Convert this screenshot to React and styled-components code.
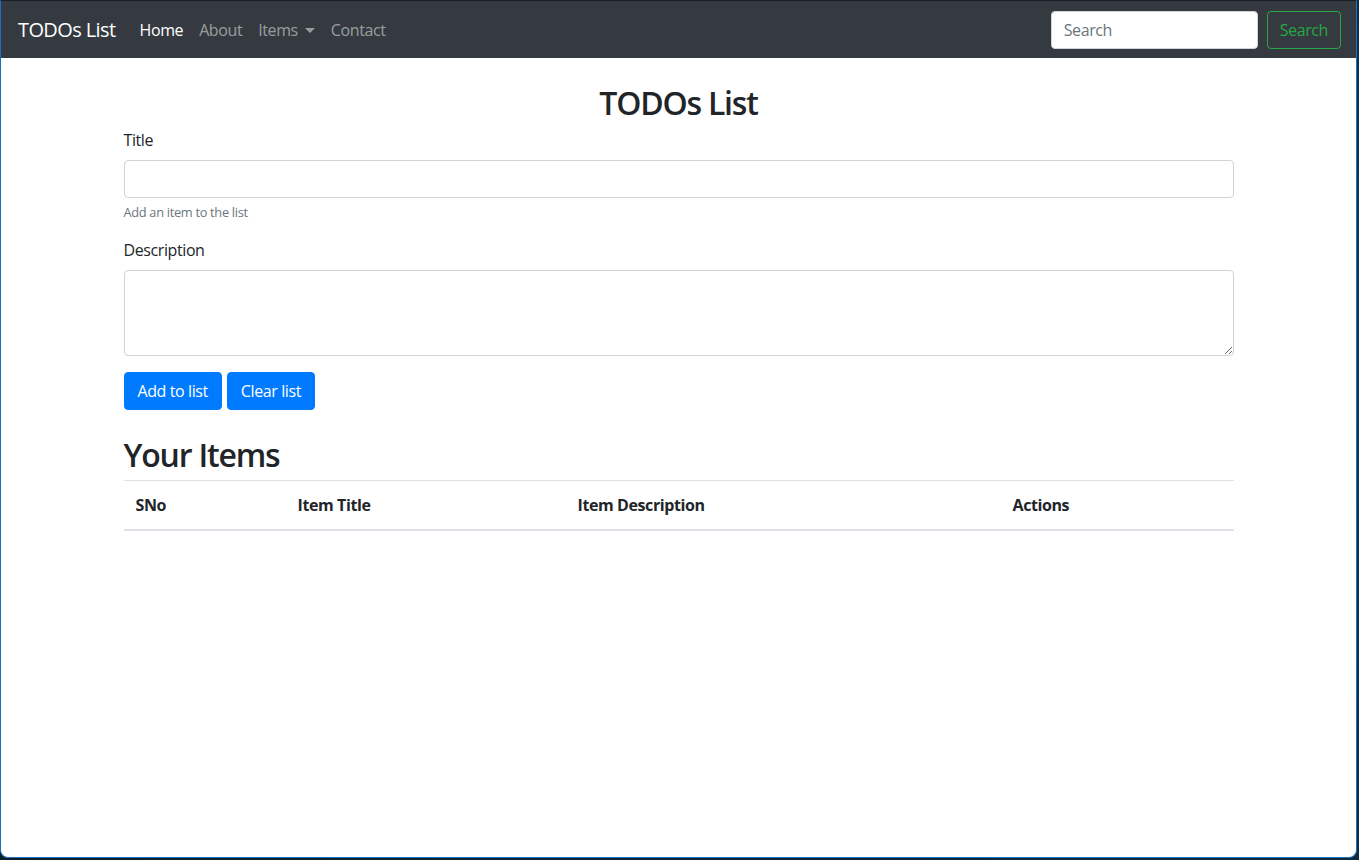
import React, { useState } from "react";
import styled, { createGlobalStyle } from "styled-components";

const GlobalStyle = createGlobalStyle`
  html, body {
    margin: 0;
    padding: 0;
    background: #0c2535;
  }
  body {
    font-family: "Open Sans", "Noto Sans", Arial, sans-serif;
    color: #212529;
    font-size: 16px;
    line-height: 1.5;
  }
  * { box-sizing: border-box; }
`;

const Desktop = styled.div`
  width: 1359px;
  height: 860px;
  background: radial-gradient(circle at 90% 40%, #123a55 0%, #0c2535 50%, #08202c 100%);
`;

const Window = styled.div`
  width: 1357px;
  height: 858px;
  background: #fff;
  border: 1px solid #1a6fc0;
  border-top-color: #1b1e22;
  border-radius: 0 0 8px 8px;
  overflow: hidden;
  display: flex;
  flex-direction: column;
`;

const Navbar = styled.nav`
  height: 57px;
  flex-shrink: 0;
  background: #343a40;
  display: flex;
  align-items: center;
  padding: 1px 15px 0 17px;
`;

const Brand = styled.a`
  color: #fff;
  font-size: 20px;
  line-height: 30px;
  margin-right: 16px;
  letter-spacing: -0.6px;
  white-space: nowrap;
`;

const NavList = styled.ul`
  display: flex;
  list-style: none;
  margin: 0;
  padding: 0;
  flex: 1;
`;

const NavLink = styled.a`
  display: flex;
  align-items: center;
  padding: 8px;
  line-height: 24px;
  letter-spacing: -0.4px;
  color: ${(p) => (p.$active ? "#fff" : "rgba(255,255,255,0.5)")};
  cursor: pointer;
`;

const Caret = styled.span`
  display: inline-block;
  margin-left: 7px;
  border-top: 5px solid rgba(255, 255, 255, 0.5);
  border-left: 5px solid transparent;
  border-right: 5px solid transparent;
`;

const SearchForm = styled.form`
  display: flex;
  align-items: center;
  gap: 9px;
`;

const SearchInput = styled.input`
  width: 207px;
  height: 38px;
  padding: 6px 12px;
  font-family: inherit;
  font-size: 16px;
  letter-spacing: -0.4px;
  color: #495057;
  border: 1px solid #ced4da;
  border-radius: 4px;
  outline: none;
  &::placeholder { color: #6c757d; }
`;

const OutlineButton = styled.button`
  height: 38px;
  padding: 6px 12px;
  font-family: inherit;
  font-size: 16px;
  letter-spacing: -0.4px;
  color: #28a745;
  background: transparent;
  border: 1px solid #28a745;
  border-radius: 4px;
`;

const Container = styled.div`
  width: 1110px;
  margin: 26px auto 0;
`;

const Heading = styled.h2`
  margin: 0 0 6px;
  font-size: 32px;
  font-weight: 600;
  line-height: 38px;
  letter-spacing: -1.2px;
  text-align: ${(p) => (p.$center ? "center" : "left")};
`;

const FormGroup = styled.div`
  margin-bottom: 16px;
`;

const Label = styled.label`
  display: block;
  margin-bottom: 8px;
  line-height: 24px;
  letter-spacing: -0.4px;
`;

const TextInput = styled.input`
  display: block;
  width: 100%;
  height: 38px;
  padding: 6px 12px;
  font-family: inherit;
  font-size: 16px;
  border: 1px solid #ced4da;
  border-radius: 4px;
  outline: none;
`;

const TextArea = styled.textarea`
  display: block;
  width: 100%;
  height: 86px;
  padding: 6px 12px;
  font-family: inherit;
  font-size: 16px;
  border: 1px solid #ced4da;
  border-radius: 4px;
  outline: none;
  resize: vertical;
`;

const Help = styled.small`
  display: block;
  margin-top: 4px;
  font-size: 12.8px;
  line-height: 20px;
  letter-spacing: -0.3px;
  color: #6c757d;
`;

const Buttons = styled.div`
  display: flex;
  gap: 5px;
`;

const PrimaryButton = styled.button`
  height: 38px;
  padding: 6px 13px;
  font-family: inherit;
  font-size: 16px;
  letter-spacing: -0.4px;
  color: #fff;
  background: #007bff;
  border: 1px solid #007bff;
  border-radius: 4px;
`;

const Table = styled.table`
  width: 100%;
  border-collapse: collapse;
`;

const Th = styled.th`
  width: ${(p) => p.$w}px;
  padding: 12px;
  text-align: left;
  font-weight: 700;
  line-height: 24px;
  letter-spacing: -0.4px;
  border-top: 1px solid #dee2e6;
  border-bottom: 2px solid #dee2e6;
`;

export default function App() {
  const [title, setTitle] = useState("");
  const [desc, setDesc] = useState("");

  return (
    <>
      <GlobalStyle />
      <Desktop>
        <Window>
          <Navbar>
            <Brand>TODOs List</Brand>
            <NavList>
              <li><NavLink $active>Home</NavLink></li>
              <li><NavLink>About</NavLink></li>
              <li><NavLink>Items<Caret /></NavLink></li>
              <li><NavLink>Contact</NavLink></li>
            </NavList>
            <SearchForm onSubmit={(e) => e.preventDefault()}>
              <SearchInput type="search" placeholder="Search" />
              <OutlineButton type="submit">Search</OutlineButton>
            </SearchForm>
          </Navbar>

          <Container>
            <Heading $center>TODOs List</Heading>
            <FormGroup>
              <Label>Title</Label>
              <TextInput value={title} onChange={(e) => setTitle(e.target.value)} />
              <Help>Add an item to the list</Help>
            </FormGroup>
            <FormGroup>
              <Label>Description</Label>
              <TextArea rows={3} value={desc} onChange={(e) => setDesc(e.target.value)} />
            </FormGroup>
            <Buttons>
              <PrimaryButton>Add to list</PrimaryButton>
              <PrimaryButton>Clear list</PrimaryButton>
            </Buttons>
          </Container>

          <Container>
            <Heading>Your Items</Heading>
            <Table>
              <thead>
                <tr>
                  <Th $w={162}>SNo</Th>
                  <Th $w={280}>Item Title</Th>
                  <Th $w={435}>Item Description</Th>
                  <Th $w={233}>Actions</Th>
                </tr>
              </thead>
              <tbody></tbody>
            </Table>
          </Container>
        </Window>
      </Desktop>
    </>
  );
}
